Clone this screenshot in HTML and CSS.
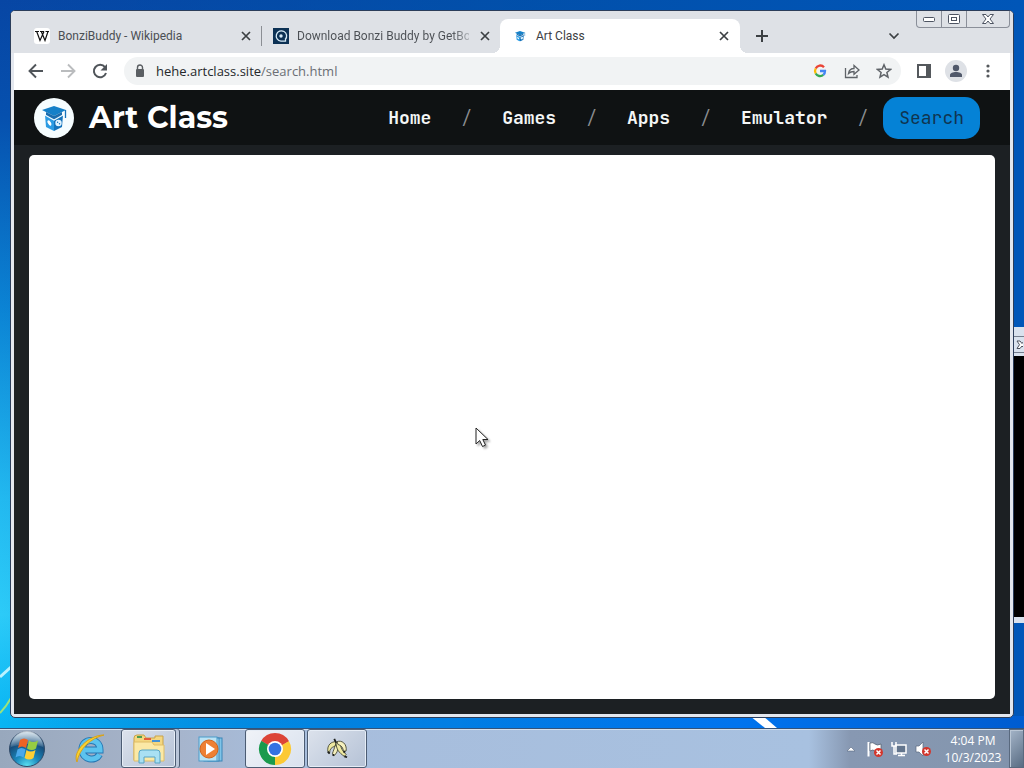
FILE: index.html
```html
<!DOCTYPE html>
<html lang="en">
<head>
<meta charset="utf-8">
<title>Art Class</title>
<link rel="stylesheet" href="styles.css">
</head>
<body>
<svg class="defs" aria-hidden="true">
  <defs>
    <symbol id="close" viewBox="0 0 16 16"><path d="M4 4l8 8M12 4l-8 8" stroke="#3c4043" stroke-width="1.700" fill="none"/></symbol>
    <symbol id="artlogo" viewBox="0 0 26 26">
      <path d="M4 10l9 4v12l-8-4z" fill="#2b9be3"/>
      <path d="M22 10l-9 4v12l8-4z" fill="#1573bb"/>
      <path d="M1 5l12-4 12 4-12 6z" fill="#1580c8"/>
      <path d="M5 7v4l8 4 8-4V7l-8 4z" fill="#1b6cad"/>
      <path d="M4 10l9 5 9-5" stroke="#e9f8ff" stroke-width="1.400" fill="none"/>
      <path d="M24.500 5v8" stroke="#1573bb" stroke-width="1.300"/>
      <ellipse cx="8.500" cy="18" rx="1.500" ry="3" fill="#fff" transform="rotate(-32 8.500 18)"/>
      <circle cx="17.500" cy="18" r="3.200" fill="#e2f4ff"/>
      <circle cx="16.600" cy="17.300" r=".7" fill="#1573bb"/><circle cx="18.500" cy="18.800" r=".7" fill="#1573bb"/>
    </symbol>
  </defs>
</svg>
<div class="desktop">
  <main class="workspace">
    <svg class="streak" viewBox="0 0 32 12" aria-hidden="true"><path d="M2 0h13l14 12H17z" fill="#fff"/></svg>
    <svg class="rays" viewBox="0 0 11 70" aria-hidden="true"><path d="M0 19L11 9" stroke="#b9f2ff" stroke-width="3"/><path d="M0 55Q6 49 11 40" stroke="#9be37c" stroke-width="2" fill="none"/></svg>
    <div class="back-window">
      <div class="back-title"></div>
      <div class="back-close"><svg viewBox="0 0 9 13"><path d="M3 3h3l2 2.500L10 3v7l-2-2-2 2.500H3L5.500 6.700z" fill="#fff" stroke="#4b505c"/></svg></div>
      <div class="back-screen"></div>
    </div>
    <section class="window">
      <div class="caption">
        <button aria-label="Minimize"><svg width="14" height="8" viewBox="0 0 14 8"><rect x="1.500" y="2.500" width="11" height="4" rx="1" fill="#fff" stroke="#4d5462"/></svg></button>
        <button aria-label="Maximize"><svg width="14" height="12" viewBox="0 0 14 12"><rect x="1.500" y="1.500" width="11" height="9" rx="1" fill="#fff" stroke="#4d5462"/><rect x="4.500" y="4.500" width="5" height="3" fill="#fff" stroke="#4d5462"/></svg></button>
        <button class="caption-close" aria-label="Close"><svg width="14" height="12" viewBox="0 0 14 12"><path d="M1.500 1.500h3.500l2 2.500 2-2.500h3.500L9 6l3.500 4.500H9L7 8l-2 2.500H1.500L5 6z" fill="#fff" stroke="#4d5462"/></svg></button>
      </div>
      <div class="tabs">
        <div class="tab">
          <svg class="fav" viewBox="0 0 16 16"><rect width="16" height="16" rx="3" fill="#fff"/><path d="M1 3.500h4M6 3.500h4M11.500 3.500h3.500" stroke="#111"/><path d="M2.700 3.500l3.300 9 4-9M7.300 3.500l3.700 9 3-9" fill="none" stroke="#111" stroke-width="1.200"/></svg>
          <span class="tab-title">BonziBuddy - Wikipedia</span>
          <button class="tab-close" aria-label="Close tab"><svg viewBox="0 0 16 16"><use href="#close"/></svg></button>
        </div>
        <div class="tab divided">
          <svg class="fav" viewBox="0 0 16 16"><rect width="16" height="16" fill="#0c3154"/><path d="M12.300 11.500A5.200 5.200 0 1 0 8 13.200h4.500v-3" fill="none" stroke="#d6eaf6" stroke-width="1.300"/><circle cx="8" cy="8" r="1.700" fill="#d6eaf6"/></svg>
          <span class="tab-title fade">Download Bonzi Buddy by GetBo</span>
          <button class="tab-close" aria-label="Close tab"><svg viewBox="0 0 16 16"><use href="#close"/></svg></button>
        </div>
        <div class="tab active">
          <svg class="fav" viewBox="-6 -6 38 38"><use href="#artlogo" width="26" height="26"/></svg>
          <span class="tab-title">Art Class</span>
          <button class="tab-close" aria-label="Close tab"><svg viewBox="0 0 16 16"><use href="#close"/></svg></button>
        </div>
        <button class="new-tab" aria-label="New tab"><svg viewBox="0 0 16 16"><path d="M8 2v12M2 8h12" stroke="#3c4043" stroke-width="2"/></svg></button>
        <button class="tab-search" aria-label="Search tabs"><svg viewBox="0 0 16 16"><path d="M3.500 5.500L8 10l4.500-4.500" stroke="#3c4043" stroke-width="1.700" fill="none"/></svg></button>
      </div>
      <div class="toolbar">
        <button aria-label="Back"><svg viewBox="0 0 16 16"><path d="M15 8H2M8 1.500L1.500 8 8 14.500" fill="none" stroke="#50555a" stroke-width="1.900"/></svg></button>
        <button aria-label="Forward"><svg viewBox="0 0 16 16"><path d="M1 8h13M8 1.500L14.500 8 8 14.500" fill="none" stroke="#babcbe" stroke-width="1.900"/></svg></button>
        <button aria-label="Reload"><svg viewBox="0 0 16 16"><path d="M13 4.200A6.200 6.200 0 1 0 14 10" fill="none" stroke="#50555a" stroke-width="2"/><path d="M15 1v6.500H8.500z" fill="#50555a"/></svg></button>
        <div class="omnibox">
          <svg class="lock" viewBox="0 0 16 16"><rect x="4" y="6" width="8" height="8" rx="1" fill="#5b5f63"/><path d="M5.500 6V4.500a2.500 2.500 0 0 1 5 0V6" fill="none" stroke="#5b5f63" stroke-width="1.400"/></svg>
          <a class="url" href="#">hehe.artclass.site<span>/search.html</span></a>
          <button aria-label="Google"><svg viewBox="0 0 16 16"><g fill="none" stroke-width="2.300"><path d="M12 4.200A5 5 0 0 0 3.700 5.500" stroke="#ea4335"/><path d="M3.700 5.500a5 5 0 0 0 0 5" stroke="#fbbc05"/><path d="M3.700 10.500a5 5 0 0 0 7.600 1.400" stroke="#34a853"/><path d="M11.300 11.900A5 5 0 0 0 13 8H8" stroke="#4285f4"/></g></svg></button>
          <button aria-label="Share"><svg viewBox="0 0 16 16"><path d="M1.500 5v9.500H13V12M4.500 10.500c.5-3 2.500-5 5.500-5V2.500L15 7l-5 4.300V8.500c-2.500 0-4 .5-5.500 2z" fill="none" stroke="#5f6368" stroke-width="1.300"/></svg></button>
          <button aria-label="Bookmark"><svg viewBox="0 0 16 16"><path d="M8 1.800l1.800 4.300 4.700.4-3.600 3 1.100 4.600-4-2.500-4 2.500 1.100-4.600-3.600-3 4.700-.4z" fill="none" stroke="#5f6368" stroke-width="1.500"/></svg></button>
        </div>
        <button class="side" aria-label="Side panel"><svg viewBox="0 0 16 16"><rect x="2" y="2" width="12" height="12" fill="#fff" stroke="#54585c" stroke-width="2"/><path d="M10 1h5v14h-5z" fill="#54585c"/></svg></button>
        <button class="avatar" aria-label="Profile"><svg viewBox="0 0 16 16"><circle cx="8" cy="5" r="3.200" fill="#50586a"/><path d="M2 14v-2c0-4 12-4 12 0v2z" fill="#50586a"/></svg></button>
        <button class="menu" aria-label="Menu"><svg viewBox="0 0 16 16" fill="#54585c"><circle cx="8" cy="3" r="1.600"/><circle cx="8" cy="8" r="1.600"/><circle cx="8" cy="13" r="1.600"/></svg></button>
      </div>
      <div class="site">
        <header class="site-header">
          <span class="logo"><svg viewBox="0 0 26 26"><use href="#artlogo"/></svg></span>
          <h1>Art Class</h1>
          <nav>
            <a href="#">Home</a><i>/</i><a href="#">Games</a><i>/</i><a href="#">Apps</a><i>/</i><a href="#">Emulator</a><i>/</i>
          </nav>
          <a class="search" href="#">Search</a>
        </header>
        <div class="frame"></div>
      </div>
    </section>
    <svg class="cursor" viewBox="0 0 14 21" aria-hidden="true"><path d="M1 1v16l3.700-3.500L7.500 19.500l3-1.400L7.800 12.500H13z" fill="#fff" stroke="#222"/></svg>
  </main>
  <footer class="taskbar">
    <button class="start" aria-label="Start"><svg viewBox="0 0 38 38">
      <defs>
        <radialGradient id="orb" cx=".5" cy="1" r="1"><stop offset="0" stop-color="#5fe5f4"/><stop offset=".35" stop-color="#1b89bd"/><stop offset=".7" stop-color="#164d7b"/><stop offset="1" stop-color="#8fb2cb"/></radialGradient>
        <linearGradient id="gloss" x2="0" y2="1"><stop stop-color="#fff" stop-opacity=".7"/><stop offset="1" stop-color="#fff" stop-opacity=".1"/></linearGradient>
      </defs>
      <circle cx="19" cy="19" r="17.500" fill="url(#orb)" stroke="#304a68"/>
      <path d="M3 17a16 16 0 0 1 32 0q-15-6-32 0z" fill="url(#gloss)"/>
      <path d="M12 10q4-3 8 0l-2 8q-4-3-8 0z" fill="#ee6325"/><path d="M21 10.500q4 3 9 0l-2 8q-4 3-9 0z" fill="#97cc43"/>
      <path d="M9.500 19.500q4-3 8 0l-2 8q-4-3-8 0z" fill="#4aa8eb"/><path d="M18.500 20q4 3 9 0l-2 8q-4 3-9 0z" fill="#ffcf35"/>
    </svg></button>
    <button class="task ie" aria-label="Internet Explorer"><svg viewBox="0 0 34 34">
      <path d="M26.500 22.500c-4 7.500-17.500 5.500-17.500-5 0-12 18-12.500 18 .5H11" fill="none" stroke="#2577b3" stroke-width="7"/>
      <path d="M26.500 22.500c-4 7.500-17.500 5.500-17.500-5 0-12 18-12.500 18 .5H11" fill="none" stroke="#5cc3ee" stroke-width="5.200"/>
      <path d="M4 30C-1 20 15 3 31 3c-13 3-25 14-27 27z" fill="#f9d231" stroke="#d9a21a"/>
    </svg></button>
    <button class="task open stacked" aria-label="File Explorer"><svg viewBox="0 0 34 34">
      <path d="M2 6q0-3 3-3h7l2 3h9V4h8v24H2z" fill="#f4d780" stroke="#c9a348"/>
      <path d="M5 5h5" stroke="#4c9c52" stroke-width="2"/><path d="M12 7h7" stroke="#e45c3c" stroke-width="2"/><path d="M20 9h8" stroke="#4291d4" stroke-width="2"/>
      <path d="M2 10h18l2 3h10v16H2z" fill="#fbe9a6" stroke="#dfbd66"/>
      <path d="M7 31V21q0-3 3-3h15q3 0 3 3v10h-5v-6H12v6z" fill="#a9e0f3" stroke="#57a5c5"/>
    </svg></button>
    <button class="task wmp" aria-label="Media Player"><svg viewBox="0 0 34 34">
      <rect x="14" y="6" width="14" height="23" fill="#80c4e8" stroke="#3a86b8"/><rect x="10" y="6" width="15" height="23" fill="#a7d8ef" stroke="#3a86b8"/><rect x="5" y="5" width="18" height="24" fill="#bbe3f5" stroke="#4b9bc9"/>
      <circle cx="15" cy="17" r="9" fill="#ee8034" stroke="#d1641b"/><path d="M12 11l9 6-9 6z" fill="#fff"/>
    </svg></button>
    <button class="task open chrome" aria-label="Google Chrome"><svg viewBox="0 0 34 34">
      <path d="M17 17L3.140 9A16 16 0 0 1 30.860 9z" fill="#dc4437"/>
      <path d="M17 17L17 33A16 16 0 0 1 3.140 9z" fill="#1a9a4d"/>
      <path d="M17 17L30.860 9A16 16 0 0 1 17 33z" fill="#fcc934"/>
      <path d="M17 9H30.860L17 17z" fill="#dc4437"/><path d="M10.070 21L3.140 9 17 17z" fill="#1a9a4d"/><path d="M23.930 21L17 33V17z" fill="#fcc934"/>
      <circle cx="17" cy="17" r="8" fill="#fff"/><circle cx="17" cy="17" r="6.300" fill="#3372e2"/>
    </svg></button>
    <button class="task open banana" aria-label="BonziBuddy"><svg viewBox="0 0 24 24">
      <path d="M11 4C6 4 1 7 2 15l2 1c0-4 2-6 6-7z" fill="#efe9a0" stroke="#4a4c35"/>
      <path d="M10 8c-1 4-2 6-3 9l2 2c3-2 4-6 4-9z" fill="#f5f0bd" stroke="#4a4c35"/>
      <path d="M11 5c0 7 3 11 9 15l2-2c-4-4-6-7-7-13z" fill="#efe9a0" stroke="#4a4c35"/>
      <path d="M12 4c5-2 11 2 10 10l-3 1c0-4-2-7-6-8z" fill="#f5f0bd" stroke="#4a4c35"/>
      <path d="M9 1l2 4M2 15l2 2M7 18l2 1M20 20l3 1M19 15l2 0" stroke="#1d1f1c" stroke-width="2"/>
    </svg></button>
    <div class="tray">
      <button class="arrow" aria-label="Show hidden icons"><svg viewBox="0 0 16 16"><path d="M4 10l4-4 4 4z" fill="#fff" stroke="#59687f" stroke-width=".6"/></svg></button>
      <button aria-label="Action Center"><svg viewBox="0 0 16 16"><path d="M1.500 1v14.500" stroke="#fff" stroke-width="2"/><path d="M3 2q3-1 5 1t6 0v7q-4 2-6 0t-5 0z" fill="#fff" stroke="#4d5969" stroke-width=".7"/><circle cx="11.500" cy="11.500" r="4.500" fill="#d3362c"/><path d="M9.500 9.500l4 4m0-4l-4 4" stroke="#fff" stroke-width="1.500"/></svg></button>
      <button aria-label="Network"><svg viewBox="0 0 16 16"><rect x="5" y="4" width="10" height="8" fill="#63758d" stroke="#fff" stroke-width="1.500"/><path d="M7 14.500h7M10.500 12v2M1 1v4h4V1M3 5v8h3" stroke="#fff" stroke-width="1.500" fill="none"/></svg></button>
      <button aria-label="Volume"><svg viewBox="0 0 16 16"><path d="M1 5h3l4-4v14l-4-4H1z" fill="#fff" stroke="#59687f" stroke-width=".7"/><circle cx="11.500" cy="10.500" r="4.500" fill="#d3362c"/><path d="M9.500 8.500l4 4m0-4l-4 4" stroke="#fff" stroke-width="1.500"/></svg></button>
      <div class="clock"><time>4:04 PM</time><time>10/3/2023</time></div>
      <button class="show-desktop" aria-label="Show desktop"></button>
    </div>
  </footer>
</div>
</body>
</html>
```
FILE: styles.css
```css
* { box-sizing: border-box; }
body { margin: 0; font-family: "Open Sans", "Noto Sans", sans-serif; }
button { border: 0; padding: 0; background: none; font: inherit; }
a { color: inherit; text-decoration: none; }
svg { display: block; flex: none; }
.defs { position: absolute; width: 0; height: 0; }

.desktop {
  display: flex;
  flex-direction: column;
  height: 100vh;
  overflow: hidden;
  background:
    linear-gradient(90deg, transparent 0%, rgba(0, 132, 240, .75) 45%, #0074ee 72%, #005cd0 100%) bottom / 100% 52px no-repeat,
    linear-gradient(90deg, transparent 0%, rgba(0, 82, 172, .8) 50%, #0056b8 100%),
    linear-gradient(180deg, #0746a4 0%, #0650ae 15%, #0b83d4 40%, #22b9f0 65%, #2ccbf8 80%, #08b5f4 94%);
}
.workspace { position: relative; flex: 1; min-height: 0; display: flex; padding: 10px; }
.streak { position: absolute; left: 73%; bottom: 0; width: 32px; height: 12px; }
.rays { position: absolute; left: 0; bottom: 0; width: 11px; height: 70px; }

.back-window { position: absolute; right: 0; top: 327px; width: 10px; height: 296px; display: flex; flex-direction: column; background: #d9e2ee; padding-bottom: 6px; }
.back-title { height: 9px; }
.back-close { height: 17px; border: solid #747e8d; border-width: 1px 0; }
.back-close svg { width: 9px; height: 15px; }
.back-screen { flex: 1; margin-top: 3px; background: #000; }

.window { position: relative; flex: 1; display: flex; flex-direction: column; min-width: 0; padding: 0 3px 3px; border: 1px solid #2b3d5a; border-radius: 5px; background: #e3e7ee; overflow: hidden; }
.caption { position: absolute; top: 0; right: 3px; display: flex; height: 17px; border: 1px solid #8a8f99; border-top: 0; border-radius: 0 0 4px 4px; }
.caption button { width: 25px; display: grid; place-items: center; border-right: 1px solid #8a8f99; }
.caption .caption-close { width: 42px; border-right: 0; }

.tabs { display: flex; height: 42px; margin: 0 -3px; padding: 8px 0 0 11px; background: #dee1e6; }
.tab { width: 239px; display: flex; align-items: center; gap: 8px; padding: 0 7px 0 12px; color: #4b4f54; font: 12px/16px Roboto, "Open Sans", sans-serif; }
.fav { width: 16px; height: 16px; }
.tab-title { flex: 1; min-width: 0; white-space: nowrap; }
.fade { background: linear-gradient(90deg, #4b4f54 155px, #c4c8cd 175px); -webkit-background-clip: text; background-clip: text; color: transparent; }
.tab-close, .tab-close svg { width: 16px; height: 16px; }
.divided { background: linear-gradient(#8b8e94, #8b8e94) 0 50% / 1px 20px no-repeat; }
.active { position: relative; width: 240px; padding-right: 8px; background: #fff; border-radius: 8px 8px 0 0; color: #3c4043; }
.active::before, .active::after { content: ""; position: absolute; bottom: 0; width: 8px; height: 8px; }
.active::before { right: 100%; background: radial-gradient(circle at 0 0, transparent 8px, #fff 8px); }
.active::after { left: 100%; background: radial-gradient(circle at 100% 0, transparent 8px, #fff 8px); }
.new-tab, .tab-search { width: 28px; display: grid; place-items: center; }
.new-tab { margin-left: 8px; }
.new-tab svg { width: 16px; }
.tab-search { margin-left: auto; margin-right: 105px; }
.tab-search svg { width: 16px; }

.toolbar { display: flex; align-items: center; height: 37px; background: #fff; padding: 0 6px 1px; }
.toolbar button { width: 32px; height: 28px; display: grid; place-items: center; }
.toolbar svg { width: 16px; height: 16px; }
.omnibox { flex: 1; display: flex; align-items: center; height: 28px; margin: 0 7px 0 8px; padding: 0 1px 0 8px; background: #f1f3f4; border-radius: 14px; }
.url { flex: 1; margin-left: 8px; font-size: 13px; line-height: 20px; color: #25282b; }
.url span { color: #6b6f74; }
.toolbar .avatar { width: 22px; height: 22px; margin: 0 5px; border-radius: 50%; background: #dee1e6; }

.site { flex: 1; min-height: 0; display: flex; flex-direction: column; background: #1c2023; }
.site-header { display: flex; align-items: center; height: 55px; padding: 0 30px 0 20px; background: #0f1213; color: #fff; }
.logo { display: grid; place-items: center; width: 40px; height: 40px; border-radius: 50%; background: #f6fdff; }
.logo svg { width: 26px; height: 26px; }
h1 { margin: 0 auto 0 15px; font: 700 30px/40px Montserrat, Inter, sans-serif; }
nav { display: flex; align-items: center; color: #f4f6f6; font: 600 18px/24px "JetBrains Mono", "Liberation Mono", monospace; }
nav i { margin: 0 30px; font-style: normal; font-weight: 300; color: #8b8e90; }
nav i:last-child { margin-right: 15px; }
.search { padding: 9px 16px; border-radius: 15px; background: #0582d6; color: #10344f; font: 400 18px/24px "JetBrains Mono", "DejaVu Sans Mono", monospace; }
.frame { flex: 1; margin: 10px 15px 15px; border-radius: 5px; background: #fff; }
.cursor { position: absolute; left: 475px; top: 427px; width: 14px; height: 21px; filter: drop-shadow(2px 2px 1px rgba(0, 0, 0, .35)); }

.taskbar { display: flex; height: 40px; border-top: 1px solid #33537a; box-shadow: inset 0 1px #d3e0ee; background: linear-gradient(90deg, #98a8bd 0%, #a6b3c9 15%, #a7bddc 28%, #a8c1e0 79%, #8798b2 83%, #8496ae 97%, #7d8ea9 100%); }
.start { width: 54px; display: grid; place-items: center; }
.start svg { width: 38px; height: 38px; }
.task { display: grid; place-items: center; width: 60px; }
.task svg { width: 34px; height: 34px; }
.ie { margin: 0 1px 0 6px; }
.open { border: 1px solid #4c5c73; border-radius: 3px; background: linear-gradient(135deg, #dce2ec, #b5c2d6); box-shadow: inset 0 0 0 1px #e6edf6; }
.stacked { width: 55px; box-shadow: inset 0 0 0 1px #e6edf6, 3px 0 0 #bac6d9, 4px 0 0 #4c5c73; }
.wmp { margin: 0 4px 0 5px; }
.chrome { background: linear-gradient(135deg, #f0f3f8, #d9e1ee); margin-right: 2px; }
.task.banana svg { width: 22px; height: 22px; }
.tray { margin-left: auto; display: flex; align-items: center; gap: 8px; color: #fff; font-size: 12px; line-height: 17px; }
.tray svg { width: 16px; height: 16px; }
.clock { display: flex; flex-direction: column; align-items: center; width: 58px; margin-left: 5px; }
.show-desktop { align-self: stretch; width: 15px; margin-left: -1px; border: 1px solid #59697e; background: linear-gradient(135deg, #a4b4c8, #596c83); box-shadow: inset 1px 1px #b9c6d5; }
```
